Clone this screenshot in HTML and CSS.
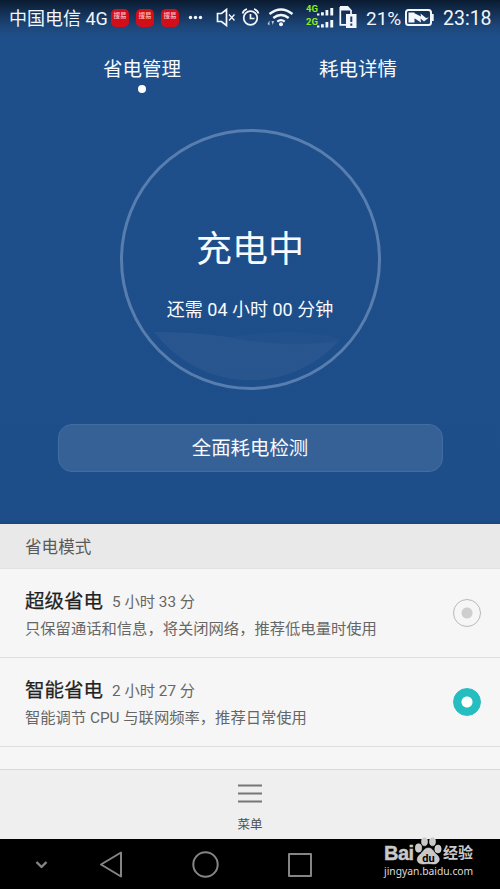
FILE: index.html
```html
<!DOCTYPE html>
<html lang="zh-CN">
<head>
<meta charset="utf-8">
<title>省电管理</title>
<link rel="stylesheet" href="styles.css">
</head>
<body>
<div class="phone">
  <section class="hero">
    <header class="status">
      <span class="carrier">中国电信 4G</span>
      <span class="notices"><i>搜易</i><i>搜易</i><i>搜易</i></span>
      <svg class="status-icons" width="178" height="36" viewBox="188 0 178 36" fill="none" stroke="#f4f8fc" stroke-width="1.7">
        <g fill="#f4f8fc" stroke="none"><circle cx="190.500" cy="17.500" r="1.700"/><circle cx="195.500" cy="17.500" r="1.700"/><circle cx="200.500" cy="17.500" r="1.700"/></g>
        <path d="M217.500 13.500h4l5-4v16l-5-4h-4z"/>
        <path d="M229 14.500l5.500 6M234.500 14.500l-5.500 6" stroke-width="1.300"/>
        <circle cx="250.500" cy="18" r="6.800"/>
        <path d="M250.500 14v4.500h4M242.500 13.500q1-3.500 4.500-4.500M254 9q3.500 1 4.500 4.500"/>
        <path d="M269.500 14q11.500-9 23 0M273.300 18q7.700-6 15.400 0M277.300 21.600q3.700-3 7.400 0" stroke-width="2.300"/>
        <circle cx="281" cy="24.200" r="2" fill="#f4f8fc" stroke="none"/>
        <path d="M267.500 24l2-3.500v5zM271.500 21h2.500l-1.200 4z" fill="#b9c9dc" stroke="none"/>
        <g fill="#f4f8fc" stroke="none">
          <path d="M317 13.500h2.400v2H317zM321 12.200h2.800v3.300H321zM325.500 10h2.800v5.500h-2.800zM330.300 8h2.900v7.500h-2.900z"/>
          <path d="M317 25.500h2.400v2H317zM321 24.200h2.800v3.300H321zM325.500 22h2.800v5.500h-2.800zM330.300 20h2.900v7.500h-2.900z"/>
          <path d="M340 6h8l4 4.500H340z"/>
          <path d="M346 14h10.500v14H346z"/>
        </g>
        <path d="M340.300 7v17.800h6M351 10v4"/>
        <path d="M351.300 16.500v5.500M351.300 23.500v2.200" stroke="#1b3d68" stroke-width="2"/>
        <g class="network" stroke="none"><text x="306" y="12">4G</text><text x="306" y="24.500">2G</text></g>
      </svg>
      <span class="percent">21%</span>
      <svg class="battery" width="30" height="20" viewBox="0 0 30 20">
        <rect x="1" y="2" width="25" height="15" rx="2.500" fill="none" stroke="#f4f8fc" stroke-width="2"/>
        <path d="M27 6h1.700v7H27zM3.500 4.500h6v10h-6zM9 5l7 3.500-.5-3L21 10l3-.5-5 4-3.500-3 .5 4-7-4.500z" fill="#f4f8fc"/>
      </svg>
      <time class="clock">23:18</time>
    </header>
    <nav class="tabs">
      <div class="tab active">省电管理</div>
      <div class="tab">耗电详情</div>
    </nav>
    <div class="gauge">
      <svg class="wave" width="260" height="260" viewBox="0 0 260 260">
        <path d="M33 202Q74 202 108 207Q164 219 218 211A120 120 0 0 1 33 202z" fill="#fff" opacity=".03"/>
        <path d="M33 202Q74 202 108 207Q177 196 220 209A120 120 0 0 1 33 202z" fill="#fff" opacity=".015"/>
      </svg>
      <h1>充电中</h1>
      <p>还需 04 小时 00 分钟</p>
    </div>
    <button class="scan">全面耗电检测</button>
  </section>
  <main class="modes">
    <h2 class="section">省电模式</h2>
    <div class="mode">
      <div class="info">
        <div class="headline"><strong>超级省电</strong><span>5 小时 33 分</span></div>
        <p>只保留通话和信息，将关闭网络，推荐低电量时使用</p>
      </div>
      <i class="radio"></i>
    </div>
    <div class="mode">
      <div class="info">
        <div class="headline"><strong>智能省电</strong><span>2 小时 27 分</span></div>
        <p>智能调节 CPU 与联网频率，推荐日常使用</p>
      </div>
      <i class="radio selected"></i>
    </div>
  </main>
  <footer class="menu">
    <svg width="26" height="20" viewBox="0 0 26 20" stroke="#777" stroke-width="2.200"><path d="M1 1.500h24M1 9.500h24M1 17.500h24"/></svg>
    <span>菜单</span>
  </footer>
  <div class="system">
    <svg width="330" height="50" viewBox="0 0 330 50" fill="none" stroke="#858585" stroke-width="2" stroke-linejoin="round">
      <path d="M36.500 23l5 5 5-5" stroke-width="2.400"/>
      <path d="M101 25.500l20-12v24z"/>
      <circle cx="205.500" cy="25.500" r="12.200"/>
      <rect x="289" y="15" width="22" height="22"/>
    </svg>
    <div class="watermark">
      <div class="brand">
        <span class="bai">Bai</span>
        <svg width="27" height="30" viewBox="0 0 27 30">
          <g fill="#c8c8c8" stroke="#eee" stroke-width=".5">
            <ellipse cx="3.500" cy="12" rx="3.200" ry="4.200"/><ellipse cx="9.500" cy="5.500" rx="3" ry="4.300"/>
            <ellipse cx="17.500" cy="5.500" rx="3" ry="4.300"/><ellipse cx="23" cy="13" rx="3.200" ry="4"/>
            <path d="M13.500 12c4 0 5 4 8 6.500 6 5 1 10-3 9.500-4-.5-6-.5-10 0-6 .5-9-5-3-10 3-2.500 4-6 8-6z"/>
          </g>
          <text class="du" x="13.500" y="26" text-anchor="middle">du</text>
        </svg>
        <span class="jingyan">经验</span>
      </div>
      <div class="site">jingyan.baidu.com</div>
    </div>
  </div>
</div>
</body>
</html>
```

FILE: styles.css
```css
* { box-sizing: border-box; }
body {
  margin: 0;
  font-family: Roboto, "Noto Sans CJK SC", sans-serif;
}
h1, h2, p { margin: 0; font-weight: 400; }
i { font-style: normal; }
.phone {
  width: 500px;
  height: 889px;
  display: flex;
  flex-direction: column;
  overflow: hidden;
  background: #f6f6f6;
}
.hero {
  height: 524px;
  flex: none;
  display: flex;
  flex-direction: column;
  align-items: center;
  color: #f7fbff;
  background: linear-gradient(#0a1b30 0, #143156 13px, #1d477b 27px, #1f4f8a 38px, #1e4e8a 520px, #1b467c 524px);
}
.status {
  width: 500px;
  height: 36px;
  display: flex;
  align-items: center;
  padding-left: 9px;
  white-space: nowrap;
  color: #f2f6fb;
}
.carrier { width: 102px; padding-top: 2px; font-size: 18px; line-height: 36px; }
.notices { width: 77px; display: flex; gap: 7px; }
.notices i {
  width: 18px;
  height: 18px;
  border-radius: 5px;
  background: #d20f18;
  color: #ffc4c4;
  font-size: 6.500px;
  font-weight: 500;
  line-height: 15px;
  text-align: center;
}
.status-icons { flex: none; }
.network { fill: #8cec20; font: 700 9.500px Roboto, sans-serif; }
.percent { width: 39px; padding-top: 2px; font-size: 19px; line-height: 36px; }
.battery { flex: none; margin-right: 8px; }
.clock { padding-top: 2px; font-size: 19.500px; line-height: 36px; }
.tabs { display: flex; height: 93px; padding-top: 20px; }
.tab {
  width: 216px;
  display: flex;
  flex-direction: column;
  align-items: center;
  font-size: 19.500px;
  line-height: 28px;
}
.tab.active::after {
  content: "";
  width: 8px;
  height: 8px;
  margin-top: 1px;
  border-radius: 50%;
  background: #fff;
}
.gauge {
  position: relative;
  width: 261px;
  height: 261px;
  flex: none;
  border: 3px solid #587eaf;
  border-radius: 50%;
  text-align: center;
  padding-top: 93px;
}
.wave { position: absolute; left: -2px; top: -2px; }
.gauge h1 { position: relative; font-size: 36px; line-height: 50px; }
.gauge p { position: relative; margin-top: 21px; font-size: 18px; line-height: 28px; }
.scan {
  width: 385px;
  height: 48px;
  margin-top: 34px;
  padding: 2px 0 0;
  border: 1px solid #446d9f;
  border-radius: 14px;
  background: #366197;
  color: #f7fbff;
  font: 400 19.400px/44px Roboto, "Noto Sans CJK SC", sans-serif;
}
.modes { height: 245px; flex: none; }
.section {
  height: 45px;
  padding-left: 25px;
  border-bottom: 1px solid #e1e1e1;
  background: #e9e9e9;
  color: #5a5a5a;
  font-size: 16.600px;
  line-height: 47px;
}
.mode {
  height: 89px;
  display: flex;
  justify-content: space-between;
  padding: 15px 19px 0 25px;
  border-bottom: 1px solid #dedede;
}
.headline { display: flex; align-items: center; height: 30px; gap: 9px; }
.headline strong { color: #222; font-size: 19.500px; font-weight: 400; -webkit-text-stroke: .25px #222; }
.headline span { padding-top: 1px; color: #666; font-size: 15.300px; }
.info p { margin-top: 2px; color: #666; font-size: 15.300px; line-height: 26px; }
.radio {
  width: 28px;
  height: 28px;
  margin-top: 15px;
  border: 1px solid #b9b9b9;
  border-radius: 50%;
  background: radial-gradient(circle, #cecece 5px, transparent 6px);
}
.radio.selected { border-color: #26bdc1; background: radial-gradient(circle, #fff 5px, #26bdc1 6px); }
.menu {
  height: 70px;
  flex: none;
  display: flex;
  flex-direction: column;
  align-items: center;
  padding-top: 14px;
  border-top: 1px solid #d9d9d9;
  background: #efefef;
}
.menu span { margin-top: 11px; color: #505050; font-size: 12.500px; line-height: 20px; }
.system { position: relative; height: 50px; flex: none; background: #000; }
.watermark { position: absolute; left: 384px; top: -3px; width: 100px; }
.brand { display: flex; align-items: flex-start; height: 27px; color: #c9c9c9; }
.bai { width: 31px; font: 700 20px/34px "Liberation Sans", sans-serif; letter-spacing: -.5px; -webkit-text-stroke: .4px #c9c9c9; }
.du { fill: #000; font: 700 11px Roboto, sans-serif; }
.jingyan { margin-left: 1px; font-size: 15px; font-weight: 700; line-height: 35px; }
.site { color: #ddd; font: 400 10.300px/16px "Noto Sans", sans-serif; }
```
